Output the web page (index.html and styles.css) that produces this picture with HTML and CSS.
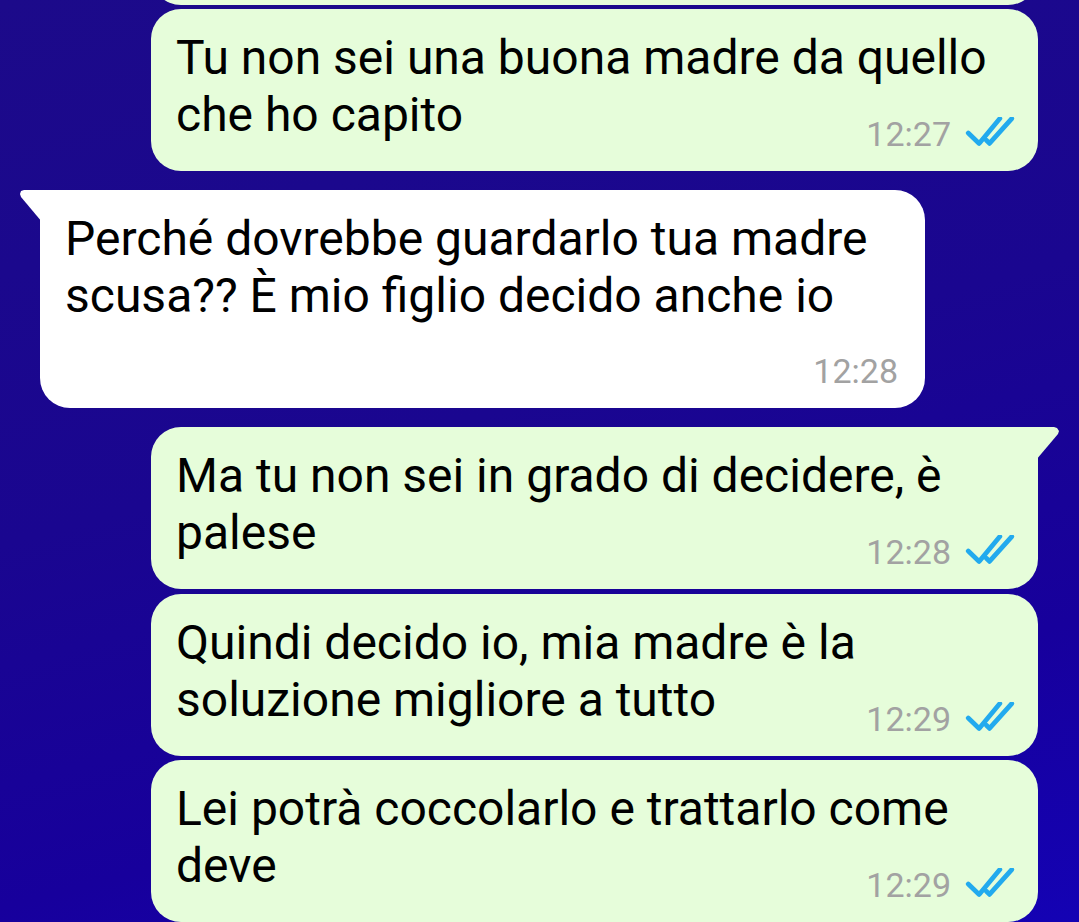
FILE: index.html
```html
<!DOCTYPE html>
<html lang="it">
<head>
<meta charset="utf-8">
<title>Chat</title>
<link rel="stylesheet" href="styles.css">
</head>
<body>
<div class="chat">
  <div class="bubble out prev"></div>

  <div class="bubble out same">
    <div class="text">Tu non sei una buona madre da quello<br>che ho capito</div>
    <div class="meta"><span class="time">12:27</span><svg class="ticks" viewBox="0 0 48 28" width="50" height="29"><path d="M3 15.5 L13.5 25.5 L33.5 1.5"/><path d="M20.5 22.5 L23.5 25.5 L45 1.5"/></svg></div>
  </div>

  <div class="bubble in tail switch">
    <div class="text">Perché dovrebbe guardarlo tua madre<br>scusa?? È mio figlio decido anche io</div>
    <div class="meta own-row"><span class="time">12:28</span></div>
  </div>

  <div class="bubble out tail switch">
    <div class="text">Ma tu non sei in grado di decidere, è<br>palese</div>
    <div class="meta"><span class="time">12:28</span><svg class="ticks" viewBox="0 0 48 28" width="50" height="29"><path d="M3 15.5 L13.5 25.5 L33.5 1.5"/><path d="M20.5 22.5 L23.5 25.5 L45 1.5"/></svg></div>
  </div>

  <div class="bubble out same next">
    <div class="text">Quindi decido io, mia madre è la<br>soluzione migliore a tutto</div>
    <div class="meta"><span class="time">12:29</span><svg class="ticks" viewBox="0 0 48 28" width="50" height="29"><path d="M3 15.5 L13.5 25.5 L33.5 1.5"/><path d="M20.5 22.5 L23.5 25.5 L45 1.5"/></svg></div>
  </div>

  <div class="bubble out same">
    <div class="text">Lei potrà coccolarlo e trattarlo come<br>deve</div>
    <div class="meta"><span class="time">12:29</span><svg class="ticks" viewBox="0 0 48 28" width="50" height="29"><path d="M3 15.5 L13.5 25.5 L33.5 1.5"/><path d="M20.5 22.5 L23.5 25.5 L45 1.5"/></svg></div>
  </div>
</div>
</body>
</html>
```

FILE: styles.css
```css
html, body {
  margin: 0;
  padding: 0;
}

body {
  width: 1079px;
  height: 922px;
  overflow: hidden;
  font-family: Roboto, "Noto Sans", "Liberation Sans", sans-serif;
  background: linear-gradient(165deg, #1c0a8a 0%, #1a0690 45%, #17009c 75%, #1402b4 100%);
}

.chat {
  display: flex;
  flex-direction: column;
}

.bubble {
  position: relative;
  box-sizing: border-box;
  border-radius: 30px;
  padding: 20px 23px 19px 25px;
}

.bubble.out {
  background: #e6fdda;
  width: 887px;
  margin-left: 151px;
}

.bubble.in {
  background: #ffffff;
  width: 885px;
  margin-left: 40px;
  padding-right: 27px;
}

.bubble.prev {
  height: 161px;
  margin-top: -156px;
  padding: 0;
}

.bubble.same {
  margin-top: 4px;
}

.bubble.next {
  margin-top: 5px;
}

.bubble.switch {
  margin-top: 19px;
}

.bubble.out.tail {
  border-top-right-radius: 0;
}

.bubble.in.tail {
  border-top-left-radius: 0;
}

.bubble.out.tail::after {
  content: "";
  position: absolute;
  top: 0;
  right: -21px;
  width: 23px;
  height: 33px;
  background: #e6fdda;
  clip-path: polygon(0 0, 18px 0, 21px 1px, 23px 4px, 22px 7px, 0 100%);
}

.bubble.in.tail::after {
  content: "";
  position: absolute;
  top: 0;
  left: -20px;
  width: 22px;
  height: 32px;
  background: #ffffff;
  clip-path: polygon(100% 0, 4px 0, 1px 1px, 0 4px, 1px 7px, 100% 100%);
}

.text {
  font-size: 48px;
  line-height: 57px;
  color: #000000;
  white-space: nowrap;
}

.meta {
  display: flex;
  justify-content: flex-end;
  align-items: center;
  gap: 14px;
  height: 36px;
  margin-top: -27px;
}

.meta.own-row {
  margin-top: 29px;
}

.time {
  font-size: 34px;
  line-height: 36px;
  color: #a2a2a2;
}

.ticks {
  display: block;
  margin-top: -6px;
}

.ticks path {
  fill: none;
  stroke: #22aaee;
  stroke-width: 4.6;
  stroke-linecap: round;
  stroke-linejoin: round;
}
```
